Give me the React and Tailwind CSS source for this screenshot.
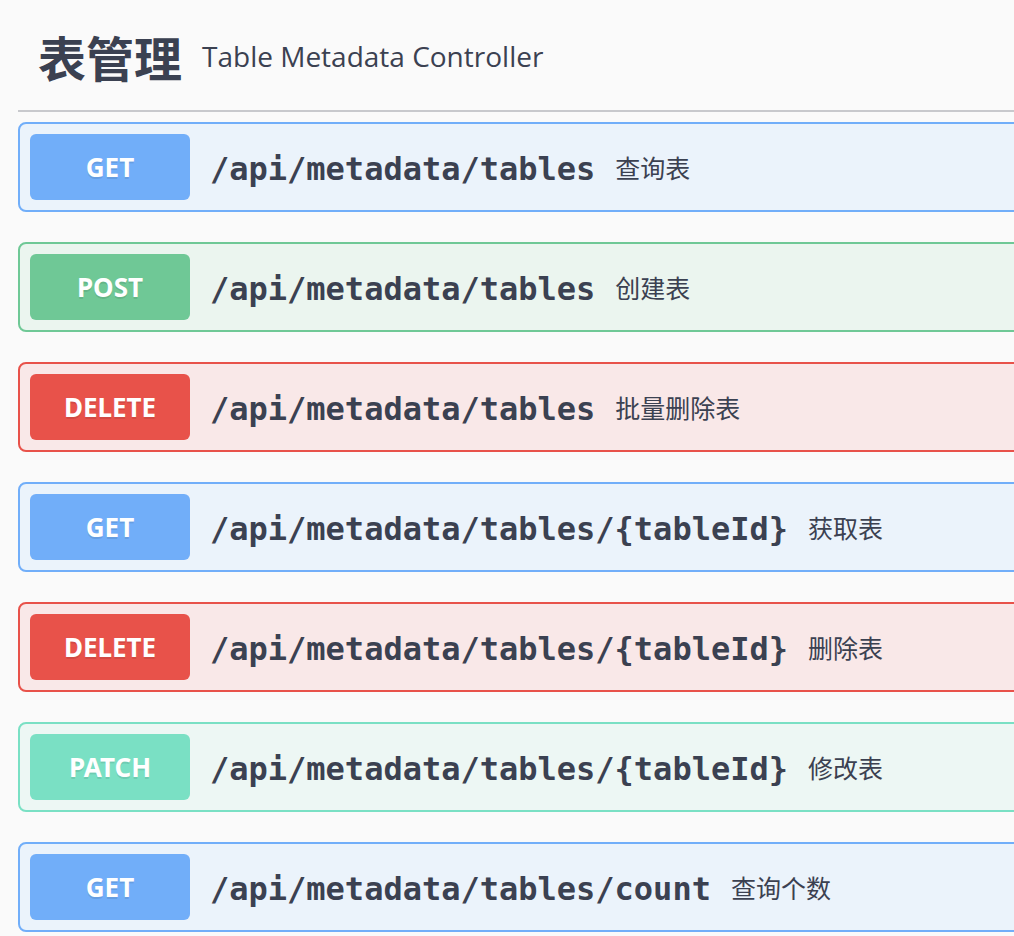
import React from 'react';

const ops = [
  { method: 'GET', path: '/api/metadata/tables', desc: '查询表', tone: 'get' },
  { method: 'POST', path: '/api/metadata/tables', desc: '创建表', tone: 'post' },
  { method: 'DELETE', path: '/api/metadata/tables', desc: '批量删除表', tone: 'delete' },
  { method: 'GET', path: '/api/metadata/tables/{tableId}', desc: '获取表', tone: 'get' },
  { method: 'DELETE', path: '/api/metadata/tables/{tableId}', desc: '删除表', tone: 'delete' },
  { method: 'PATCH', path: '/api/metadata/tables/{tableId}', desc: '修改表', tone: 'patch' },
  { method: 'GET', path: '/api/metadata/tables/count', desc: '查询个数', tone: 'get' },
];

const tones = {
  get: { row: 'bg-[#ebf3fb] border-[#71aef9]', badge: 'bg-[#71aef9]' },
  post: { row: 'bg-[#ebf5ef] border-[#6fc896]', badge: 'bg-[#6fc896]' },
  delete: { row: 'bg-[#f9e8e8] border-[#e8524a]', badge: 'bg-[#e8524a]' },
  patch: { row: 'bg-[#edf7f4] border-[#7ae0c4]', badge: 'bg-[#7ae0c4]' },
};

const OpRow = ({ op }) => {
  const t = tones[op.tone];
  return (
    <div className={`w-[1100px] h-[90px] mb-[30px] rounded-lg border-2 p-[10px] flex items-center ${t.row}`}>
      <div
        className={`w-[160px] h-[66px] shrink-0 rounded-md flex items-center justify-center text-white text-[26px] font-bold font-['Noto_Sans',sans-serif] [text-shadow:0_2px_0_rgba(0,0,0,0.1)] ${t.badge}`}
      >
        {op.method}
      </div>
      <span className="px-[20px] pt-[3px] text-[32px] font-bold text-[#3b4151] whitespace-nowrap font-['DejaVu_Sans_Mono',monospace]">
        {op.path}
      </span>
      <span className="pt-[3px] text-[25px] text-[#3b4151] whitespace-nowrap font-['Open_Sans','Noto_Sans_CJK_SC',sans-serif]">
        {op.desc}
      </span>
    </div>
  );
};

const App = () => {
  return (
    <div className="w-[1014px] h-[936px] overflow-hidden bg-[#fafafa] pl-[18px]">
      <div className="w-[1100px] h-[112px] border-b-2 border-[#c8c9cd] flex items-center pl-[20px] pt-[2px] mb-[10px]">
        <span className="text-[48px] font-bold text-[#3b4151] font-['Noto_Sans_CJK_SC',sans-serif]">
          表管理
        </span>
        <span className="pl-[20px] text-[28px] text-[#3b4151] font-['Open_Sans',sans-serif]">
          Table Metadata Controller
        </span>
      </div>
      {ops.map((op, i) => (
        <OpRow key={i} op={op} />
      ))}
    </div>
  );
};

export default App;
